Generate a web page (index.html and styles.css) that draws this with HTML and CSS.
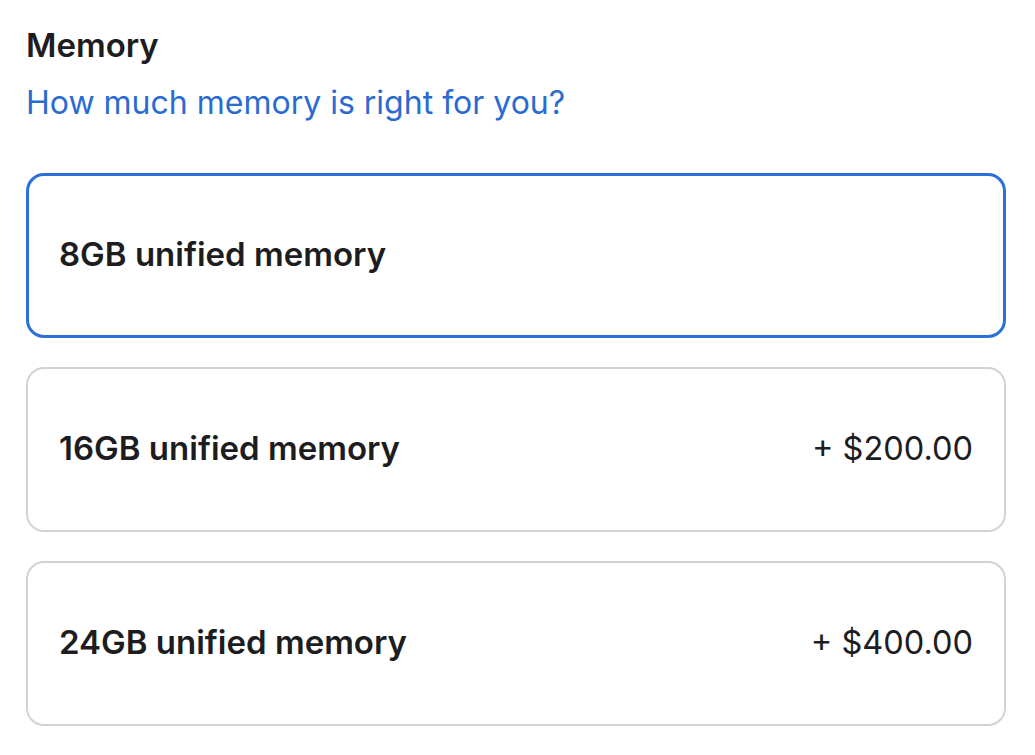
FILE: index.html
```html
<!DOCTYPE html>
<html lang="en">
<head>
<meta charset="utf-8">
<title>Memory</title>
<link rel="stylesheet" href="styles.css">
</head>
<body>
<section class="memory">
  <h2 class="memory-title">Memory</h2>
  <a class="memory-link" href="#">How much memory is right for you?</a>
  <div class="options">
    <div class="option selected">
      <span class="option-name">8GB unified memory</span>
    </div>
    <div class="option">
      <span class="option-name">16GB unified memory</span>
      <span class="option-price">+ $200.00</span>
    </div>
    <div class="option">
      <span class="option-name">24GB unified memory</span>
      <span class="option-price">+ $400.00</span>
    </div>
  </div>
</section>
</body>
</html>
```
FILE: styles.css
```css
html, body {
  margin: 0;
  padding: 0;
  background: #ffffff;
}
body {
  font-family: "Inter", "Liberation Sans", sans-serif;
  color: #1d1d1f;
}
.memory {
  padding: 26px 29px 0 26px;
}
.memory-title {
  margin: 0;
  font-size: 33px;
  font-weight: 600;
  line-height: 38px;
}
.memory-link {
  display: block;
  margin: 20px 0 0 0;
  font-size: 32px;
  line-height: 38px;
  color: #2a6bd2;
  text-decoration: none;
}
.options {
  display: flex;
  flex-direction: column;
  gap: 29px;
  margin-top: 51px;
}
.option {
  box-sizing: border-box;
  height: 165px;
  border: 2px solid #d2d2d7;
  border-radius: 18px;
  display: flex;
  align-items: center;
  justify-content: space-between;
  padding: 0 31px 3px 31px;
}
.option.selected {
  border: 3px solid #2d6fd8;
  padding-left: 30px;
}
.option-name {
  font-size: 33px;
  font-weight: 600;
}
.option-price {
  font-size: 32.5px;
  font-weight: 400;
}
```
